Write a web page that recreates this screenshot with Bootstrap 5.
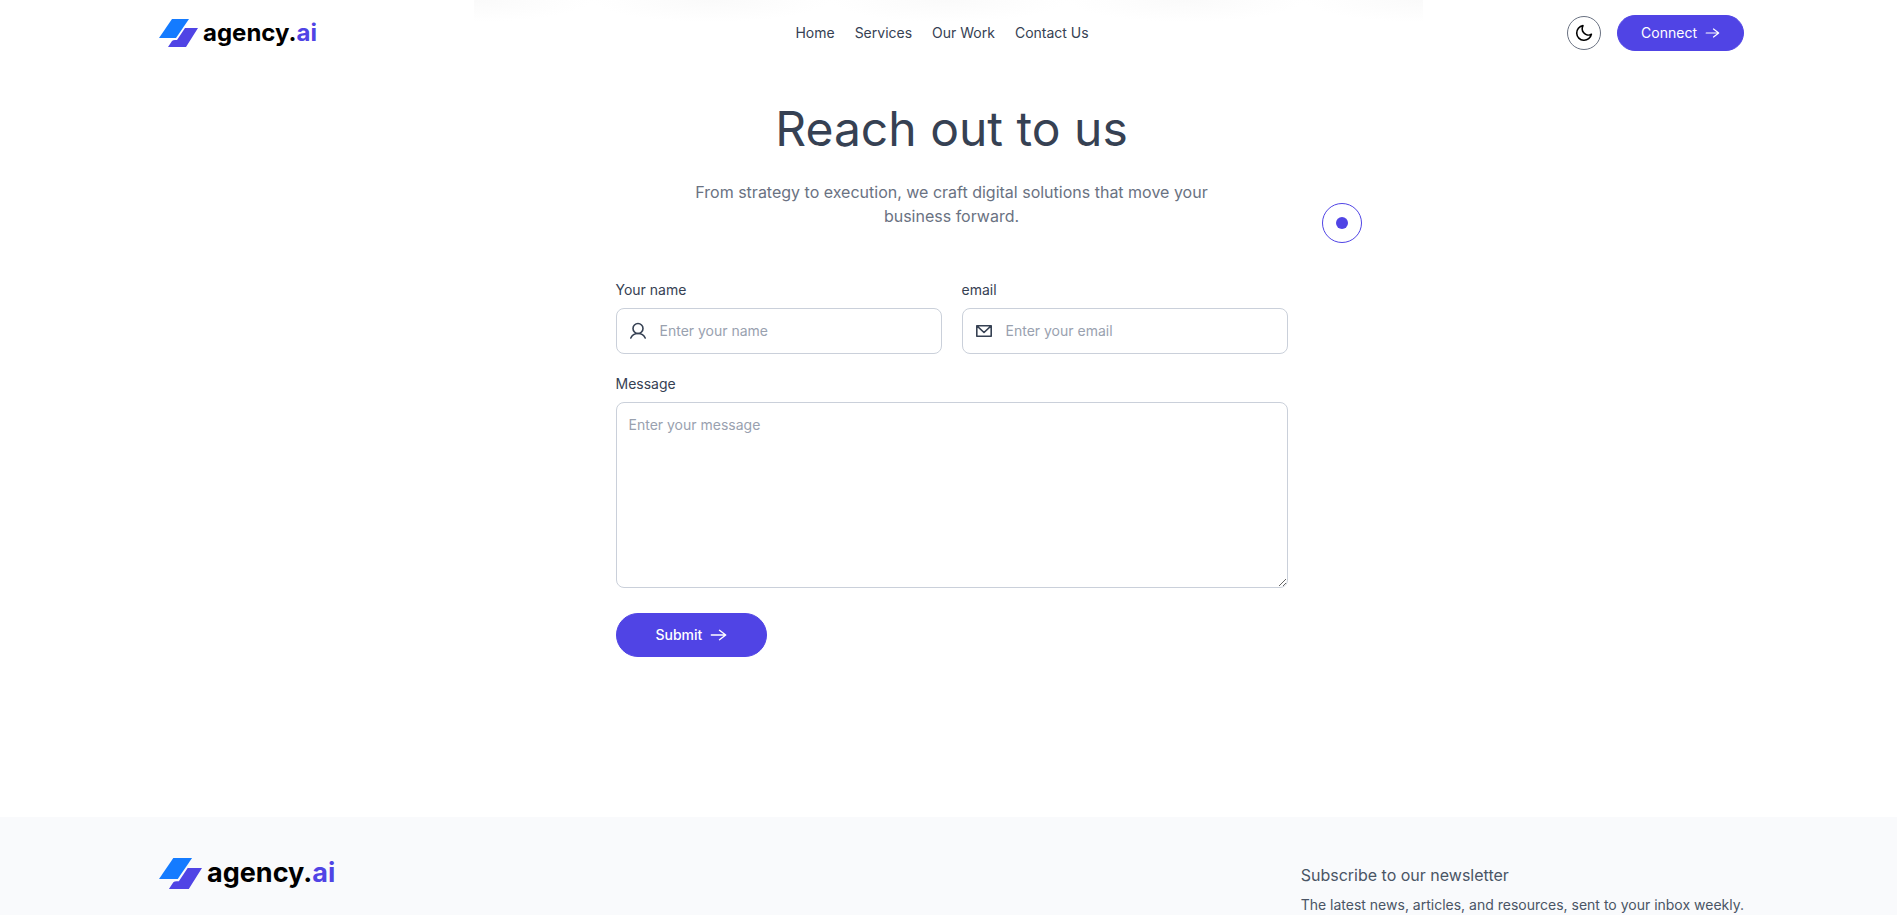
<!DOCTYPE html>
<html lang="en">
<head>
<meta charset="utf-8">
<meta name="viewport" content="width=device-width, initial-scale=1">
<title>agency.ai</title>
<link rel="stylesheet" href="https://cdn.jsdelivr.net/npm/bootstrap@5.3.0/dist/css/bootstrap.min.css">
<style>
  :root { --brand: #5044e5; --ink: #364153; --soft: #6a7282; --line: #cad0da; }
  body { font-family: Inter, "Liberation Sans", sans-serif; font-size: 14px; line-height: 20px; color: var(--ink); background: #fff; }
  .page-gutter { padding-left: 16px; padding-right: 16px; }
  @media (min-width: 1280px) { .page-gutter { padding-left: 159px; padding-right: 153px; } }
  .site-header { min-height: 66px; }
  .header-glow { top: 0; left: 25%; right: 25%; height: 22px; background: repeat-x center top / 25% 22px radial-gradient(ellipse 50% 100% at 50% 0, #fafafa, #fff); }
  .site-header .navbar-nav .nav-link { color: var(--ink); padding: 0; }
  .nav-gap { gap: 20px; }
  .logo { color: #000; font-weight: 700; font-size: 24px; line-height: 32px; gap: 5px; text-decoration: none; }
  .logo span span { color: var(--brand); }
  .logo-lg { font-size: 27px; }
  .btn-brand { --bs-btn-color: #fff; --bs-btn-bg: var(--brand); --bs-btn-border-color: var(--brand); --bs-btn-hover-color: #fff; --bs-btn-hover-bg: #4338ca; --bs-btn-hover-border-color: #4338ca; --bs-btn-font-size: 14px; --bs-btn-line-height: 20px; gap: 8px; }
  .btn-connect { padding: 7px 23px; }
  .btn-submit { padding: 11px 39px; font-weight: 500; margin-top: 25px; }
  .theme-toggle { width: 34px; height: 34px; border: 1px solid var(--soft); background: #fff; }
  .contact { padding-top: 32px; padding-bottom: 160px; }
  .contact h1 { font-size: 48px; line-height: 62px; font-weight: 400; margin-bottom: 20px; }
  .intro { max-width: 540px; font-size: 16px; line-height: 24px; color: var(--soft); }
  .contact-form { width: 100%; max-width: 672px; margin-top: 52px; }
  .contact-form .form-label { margin-bottom: 8px; }
  .form-grid { --bs-gutter-x: 20px; --bs-gutter-y: 20px; }
  .field { border: 1px solid var(--line); border-radius: 8px; padding-left: 11px; height: 46px; }
  .form-control { font-size: 14px; line-height: 20px; color: var(--ink); }
  .form-control::placeholder { color: #99a1af; }
  .message-box { border: 1px solid var(--line); border-radius: 8px; padding: 12px; height: 186px; }
  .site-footer { background: #f9fafc; padding-top: 40px; }
  .news-title { font-size: 16px; line-height: 24px; }
  .news { color: #4a5565; padding-top: 6px; gap: 9px; }
  .news p { line-height: 18px; }
  .cursor-ring { left: 1322px; top: 203px; width: 40px; height: 40px; border: 1px solid var(--brand); pointer-events: none; }
  .cursor-dot { width: 12px; height: 12px; background: var(--brand); }
</style>
</head>
<body class="d-flex flex-column min-vh-100">
<div class="header-glow position-absolute" aria-hidden="true"></div>
<header class="site-header page-gutter navbar navbar-expand py-0 d-flex justify-content-between">
  <a class="logo d-flex align-items-center" href="#">
    <svg width="39" height="28" viewBox="0 0 39 28" aria-hidden="true"><path d="M13 0h17L17 19H0z" fill="#147bff"/><path d="M26 9h13L27 28H9l4-6q1-1 3-1h2z" fill="#5044e5"/></svg>
    <span>agency.<span>ai</span></span>
  </a>
  <nav aria-label="Main">
    <ul class="navbar-nav nav-gap">
      <li class="nav-item"><a class="nav-link" href="#">Home</a></li>
      <li class="nav-item"><a class="nav-link" href="#">Services</a></li>
      <li class="nav-item"><a class="nav-link" href="#">Our Work</a></li>
      <li class="nav-item"><a class="nav-link" href="#">Contact Us</a></li>
    </ul>
  </nav>
  <div class="d-flex align-items-center gap-3">
    <button type="button" class="theme-toggle rounded-circle p-0 d-flex align-items-center justify-content-center" aria-label="Dark mode">
      <svg width="18" height="18" viewBox="0 0 18 18" fill="none" stroke="#000" stroke-width="1.6" stroke-linejoin="round" aria-hidden="true"><path d="M8 1.6A7.4 7.4 0 1 0 16.4 10.2C13.8 11.7 10.5 11 8.7 8.800C7 6.700 6.800 3.800 8 1.600z"/></svg>
    </button>
    <a class="btn btn-brand btn-connect rounded-pill d-flex align-items-center" href="#contact">Connect
      <svg width="15" height="10" viewBox="0 0 14 10" fill="none" stroke="#fff" stroke-width="1.2" stroke-linecap="round" stroke-linejoin="round" aria-hidden="true"><path d="M.7 5h12.500M8 1l5.200 4L8 9"/></svg>
    </a>
  </div>
</header>

<main id="contact" class="contact page-gutter d-flex flex-column align-items-center">
  <h1 class="text-center">Reach out to us</h1>
  <p class="intro text-center mb-0">From strategy to execution, we craft digital solutions that move your business forward.</p>
  <form class="contact-form">
    <div class="row form-grid">
      <div class="col-sm-6">
        <label class="form-label d-block" for="name">Your name</label>
        <div class="field d-flex align-items-center">
          <svg class="flex-shrink-0" width="20" height="20" viewBox="0 0 20 20" fill="none" stroke="#364153" stroke-width="1.600" stroke-linecap="round" aria-hidden="true"><circle cx="10" cy="7.500" r="5"/><path d="M2.800 17c1.200-2.700 3.800-4.500 7.200-4.500s6 1.800 7.200 4.500"/></svg>
          <input id="name" type="text" class="form-control border-0 shadow-none bg-transparent" placeholder="Enter your name">
        </div>
      </div>
      <div class="col-sm-6">
        <label class="form-label d-block" for="email">email</label>
        <div class="field d-flex align-items-center">
          <svg class="flex-shrink-0" width="20" height="20" viewBox="0 0 20 20" fill="none" stroke="#364153" stroke-width="1.600" stroke-linejoin="round" aria-hidden="true"><path d="M2.800 4.800h14.400v10.400H2.800zM3.200 5.200l6.800 6.300 6.800-6.300"/></svg>
          <input id="email" type="email" class="form-control border-0 shadow-none bg-transparent" placeholder="Enter your email">
        </div>
      </div>
      <div class="col-12">
        <label class="form-label d-block" for="message">Message</label>
        <textarea id="message" class="form-control message-box shadow-none" placeholder="Enter your message"></textarea>
      </div>
    </div>
    <button type="submit" class="btn btn-brand btn-submit rounded-pill d-flex align-items-center">Submit
      <svg width="17" height="12" viewBox="0 0 16 12" fill="none" stroke="#fff" stroke-width="1.400" stroke-linecap="round" stroke-linejoin="round" aria-hidden="true"><path d="M.8 6h14.400M9 1.300L15.200 6 9 10.700"/></svg>
    </button>
  </form>
</main>

<footer class="site-footer page-gutter flex-grow-1 d-flex justify-content-between align-items-start">
  <a class="logo logo-lg d-flex align-items-center" href="#">
    <svg width="43" height="31" viewBox="0 0 39 28" aria-hidden="true"><path d="M13 0h17L17 19H0z" fill="#147bff"/><path d="M26 9h13L27 28H9l4-6q1-1 3-1h2z" fill="#5044e5"/></svg>
    <span>agency.<span>ai</span></span>
  </a>
  <div class="news d-flex flex-column">
    <h2 class="news-title fw-normal mb-0">Subscribe to our newsletter</h2>
    <p class="mb-0">The latest news, articles, and resources, sent to your inbox weekly.</p>
  </div>
</footer>

<div class="cursor-ring position-absolute rounded-circle d-flex align-items-center justify-content-center" aria-hidden="true"><div class="cursor-dot rounded-circle"></div></div>
<script src="https://cdn.jsdelivr.net/npm/bootstrap@5.3.0/dist/js/bootstrap.bundle.min.js"></script>
</body>
</html>
